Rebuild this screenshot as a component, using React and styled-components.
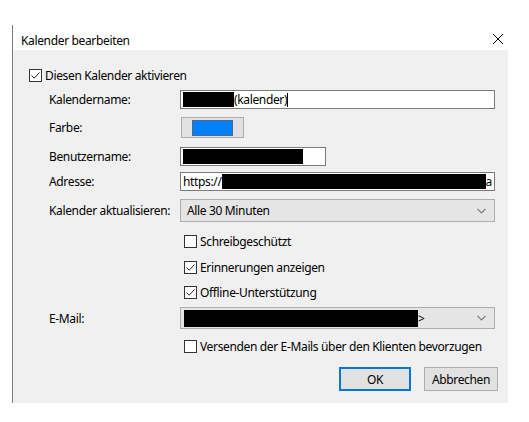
import React from "react";
import styled, { createGlobalStyle } from "styled-components";

const GlobalStyle = createGlobalStyle`
  html, body {
    margin: 0;
    padding: 0;
    background: #ffffff;
  }
  body {
    font-family: "Segoe UI", "Noto Sans", "Liberation Sans", sans-serif;
    font-size: 12px;
    letter-spacing: -0.35px;
    color: #000;
  }
`;

const Page = styled.div`
  width: 529px;
  height: 422px;
  padding: 25px 0 0 12px;
  box-sizing: border-box;
`;

const Window = styled.div`
  width: 495px;
  border-left: 1px solid #7a7a7a;
  display: flex;
  flex-direction: column;
`;

const TitleBar = styled.div`
  height: 25px;
  box-sizing: border-box;
  background: #fff;
  display: flex;
  align-items: center;
  justify-content: space-between;
  padding: 6px 4px 0 8px;
`;

const Title = styled.span`
  font-size: 12px;
`;

const CloseIcon = styled.svg`
  width: 12px;
  height: 12px;
  margin-top: -3px;
`;

const Body = styled.div`
  background: #f0f0f0;
  padding: 17px 0 12px 16px;
  display: flex;
  flex-direction: column;
`;

const Row = styled.div`
  display: flex;
  align-items: center;
  height: ${(p) => p.$h}px;
  margin-top: ${(p) => p.$top || 0}px;
`;

const Label = styled.div`
  width: 131px;
  padding-left: 20px;
  flex-shrink: 0;
`;

const Spacer = styled.div`
  width: 155px;
  flex-shrink: 0;
`;

const TextBox = styled.div`
  width: ${(p) => p.$w}px;
  height: 100%;
  box-sizing: border-box;
  border: 1px solid #7a7a7a;
  background: #fff;
  display: flex;
  align-items: center;
  padding: 1px 1px 1px 2px;
  overflow: hidden;
  white-space: nowrap;
`;

const Redacted = styled.span`
  display: inline-block;
  background: #000;
  width: ${(p) => p.$w}px;
  height: ${(p) => p.$hh || 15}px;
  flex-shrink: 0;
`;

const Caret = styled.span`
  display: inline-block;
  width: 1px;
  height: 14px;
  background: #000;
`;

const ColorButton = styled.div`
  width: 63px;
  height: 100%;
  box-sizing: border-box;
  border: 1px solid #adadad;
  background: #e1e1e1;
  display: flex;
  align-items: center;
  justify-content: center;
  margin-left: 1px;
`;

const Swatch = styled.div`
  width: 41px;
  height: 16px;
  box-sizing: border-box;
  background: #0080ff;
  border: 1px solid #4a6a8a;
`;

const Select = styled.div`
  width: 315px;
  height: 100%;
  box-sizing: border-box;
  border: 1px solid #adadad;
  background: #e5e5e5;
  display: flex;
  align-items: center;
  justify-content: space-between;
  padding: 0 8px 0 ${(p) => p.$pl || 6}px;
`;

const SelectValue = styled.div`
  display: flex;
  align-items: center;
`;

const Check = styled.label`
  display: flex;
  align-items: center;
  gap: 3px;
`;

const Box = styled.span`
  width: 13px;
  height: 13px;
  box-sizing: border-box;
  border: 1px solid #333;
  background: #fff;
  display: inline-flex;
  align-items: center;
  justify-content: center;
`;

const Buttons = styled.div`
  display: flex;
  justify-content: flex-end;
  gap: 13px;
  padding-right: 10px;
  margin-top: 13px;
  height: 24px;
`;

const Button = styled.div`
  width: ${(p) => p.$w}px;
  box-sizing: border-box;
  border: ${(p) => (p.$primary ? "2px solid #0078d7" : "1px solid #adadad")};
  background: #e1e1e1;
  display: flex;
  align-items: center;
  justify-content: center;
`;

const CheckMark = () => (
  <svg width="11" height="11" viewBox="0 0 11 11">
    <path d="M1.5 5.5 L4.2 8.2 L9.5 2.5" fill="none" stroke="#222" strokeWidth="1" />
  </svg>
);

const CheckBox = ({ checked, label }) => (
  <Check>
    <Box>{checked && <CheckMark />}</Box>
    <span>{label}</span>
  </Check>
);

const Chevron = () => (
  <svg width="9" height="6" viewBox="0 0 9 6">
    <path d="M0.5 0.8 L4.5 4.8 L8.5 0.8" fill="none" stroke="#7a7a7a" strokeWidth="1.2" />
  </svg>
);

export default function App() {
  return (
    <>
      <GlobalStyle />
      <Page>
        <Window>
          <TitleBar>
            <Title>Kalender bearbeiten</Title>
            <CloseIcon viewBox="0 0 12 12">
              <path d="M1 1 L11 11 M11 1 L1 11" stroke="#000" strokeWidth="1" />
            </CloseIcon>
          </TitleBar>

          <Body>
            <Row $h={16}>
              <CheckBox checked label="Diesen Kalender aktivieren" />
            </Row>

            <Row $h={19} $top={7}>
              <Label>Kalendername:</Label>
              <TextBox $w={315}>
                <Redacted $w={51} />
                <span>(kalender)</span>
                <Caret />
              </TextBox>
            </Row>

            <Row $h={21} $top={8}>
              <Label>Farbe:</Label>
              <ColorButton>
                <Swatch />
              </ColorButton>
            </Row>

            <Row $h={19} $top={9}>
              <Label>Benutzername:</Label>
              <TextBox $w={146}>
                <Redacted $w={120} />
              </TextBox>
            </Row>

            <Row $h={19} $top={6}>
              <Label>Adresse:</Label>
              <TextBox $w={315}>
                <span>https://</span>
                <Redacted $w={264} />
                <span>a</span>
              </TextBox>
            </Row>

            <Row $h={23} $top={8}>
              <Label>Kalender aktualisieren:</Label>
              <Select>
                <span>Alle 30 Minuten</span>
                <Chevron />
              </Select>
            </Row>

            <Row $h={16} $top={11}>
              <Spacer />
              <CheckBox label="Schreibgeschützt" />
            </Row>
            <Row $h={16} $top={10}>
              <Spacer />
              <CheckBox checked label="Erinnerungen anzeigen" />
            </Row>
            <Row $h={16} $top={9}>
              <Spacer />
              <CheckBox checked label="Offline-Unterstützung" />
            </Row>

            <Row $h={22} $top={7}>
              <Label>E-Mail:</Label>
              <Select $pl={3}>
                <SelectValue>
                  <Redacted $w={234} $hh={17} />
                  <span>&gt;</span>
                </SelectValue>
                <Chevron />
              </Select>
            </Row>

            <Row $h={16} $top={9}>
              <Spacer />
              <CheckBox label="Versenden der E-Mails über den Klienten bevorzugen" />
            </Row>

            <Buttons>
              <Button $primary $w={72}>OK</Button>
              <Button $w={74}>Abbrechen</Button>
            </Buttons>
          </Body>
        </Window>
      </Page>
    </>
  );
}
